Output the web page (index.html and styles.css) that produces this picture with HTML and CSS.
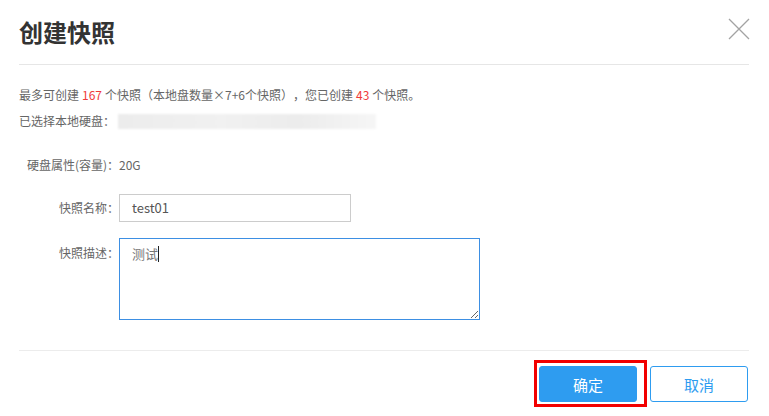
FILE: index.html
```html
<!DOCTYPE html>
<html lang="zh-CN">
<head>
<meta charset="utf-8">
<title>创建快照</title>
<link rel="stylesheet" href="styles.css">
</head>
<body>
<div class="dialog">
  <div class="header">
    <h1 class="title">创建快照</h1>
    <span class="close" aria-label="关闭">
      <svg width="22" height="22" viewBox="0 0 22 22"><path d="M1 1L21 21M21 1L1 21" stroke="#a3a3a3" stroke-width="1.3" fill="none"/></svg>
    </span>
  </div>
  <div class="body">
    <p class="info">最多可创建 <span class="num">167</span> 个快照（本地盘数量×7+6个快照），您已创建 <span class="num">43</span> 个快照。</p>
    <p class="info disk">已选择本地硬盘：<span class="blur"></span></p>
    <div class="form">
      <div class="row prop">
        <span class="label">硬盘属性(容量)：</span>
        <span class="value">20G</span>
      </div>
      <div class="row center">
        <span class="label">快照名称：</span>
        <div class="input">test01</div>
      </div>
      <div class="row">
        <span class="label lbl-top">快照描述：</span>
        <div class="textarea"><span class="txt">测试</span><span class="caret"></span></div>
      </div>
    </div>
  </div>
  <div class="footer">
    <span class="ok-wrap"><button class="btn primary">确定</button></span>
    <button class="btn ghost">取消</button>
  </div>
</div>
</body>
</html>
```

FILE: styles.css
```css
* { box-sizing: border-box; }
html, body { margin: 0; padding: 0; background: #fff; }
body {
  font-family: "Microsoft YaHei", "Noto Sans CJK SC", "Noto Sans", sans-serif;
  color: #666;
  width: 769px;
  height: 416px;
  overflow: hidden;
  text-spacing-trim: space-all;
}
.dialog { padding: 0 20px 0 19px; }
.header {
  height: 65px;
  border-bottom: 1px solid #e6e6e6;
  display: flex;
  align-items: center;
  justify-content: space-between;
  padding-bottom: 1px;
}
.title {
  margin: 0;
  font-size: 24px;
  font-weight: bold;
  color: #333;
  line-height: 30px;
  letter-spacing: 0;
}
.close { display: flex; width: 22px; height: 22px; margin-top: -6px; margin-right: -1px; }
.body { padding-top: 20px; }
.info {
  margin: 0;
  font-size: 12px;
  line-height: 20px;
  color: #666;
  display: flex;
  align-items: center;
}
.num { color: #f03a3a; margin: 0 3px; }
.disk { margin-top: 6px; }
.blur {
  display: inline-block;
  width: 258px;
  height: 15px;
  margin-left: 3px;
  background: linear-gradient(90deg, #ececec 0%, #f1f1f1 40%, #ececec 70%, #f6f6f6 100%);
  filter: blur(1px);
}
.form { margin-top: 24px; }
.row { display: flex; align-items: flex-start; font-size: 12px; }
.row.center { align-items: center; margin-top: 19px; }
.row + .row + .row { margin-top: 16px; }
.label {
  width: 100px;
  text-align: right;
  color: #666;
  line-height: 20px;
  flex: none;
}
.prop { line-height: 20px; }
.value { color: #666; line-height: 20px; }
.lbl-top { margin-top: 5px; }
.input {
  width: 232px;
  height: 28px;
  border: 1px solid #cccccc;
  padding: 0 12px;
  font-size: 13px;
  line-height: 26px;
  color: #555;
}
.textarea {
  width: 361px;
  height: 82px;
  border: 1px solid #3d8fe3;
  padding: 6px 12px;
  font-size: 13px;
  line-height: 18px;
  color: #777;
  resize: both;
  overflow: auto;
  display: flex;
  align-items: flex-start;
}
.caret {
  display: inline-block;
  width: 1px;
  height: 16px;
  background: #222;
  margin-top: 1px;
}
.footer {
  margin-top: 30px;
  border-top: 1px solid #ececec;
  padding-top: 15px;
  display: flex;
  justify-content: flex-end;
  gap: 13px;
  padding-right: 1px;
}
.ok-wrap { position: relative; display: inline-flex; }
.ok-wrap::after {
  content: "";
  position: absolute;
  left: -5px;
  right: -10px;
  top: -6px;
  bottom: -5px;
  border: 3px solid #f20000;
  pointer-events: none;
}
.btn {
  width: 98px;
  height: 36px;
  border-radius: 3px;
  font-family: inherit;
  font-size: 15px;
  padding: 0;
  cursor: pointer;
}
.primary {
  background: #2e9cf0;
  border: 1px solid #2e9cf0;
  color: #fff;
}
.ghost {
  background: #fff;
  border: 1px solid #2e9cf0;
  color: #2e9cf0;
}
```
